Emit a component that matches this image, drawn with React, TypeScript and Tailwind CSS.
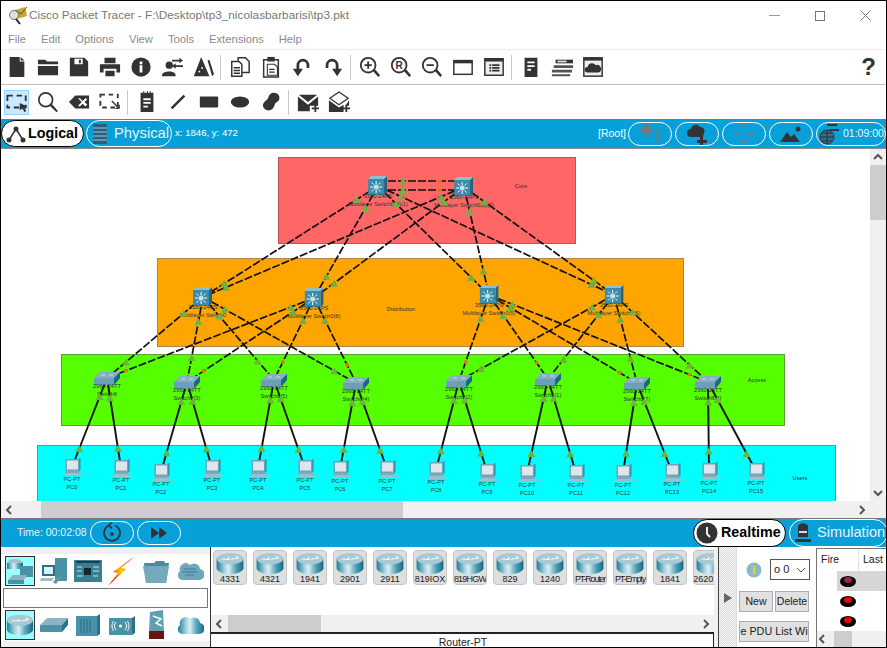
import type { ReactNode } from "react";

type Pt = { x: number; y: number };
type Kind = "mls" | "sw" | "pc";
type Node = Pt & { id: string; kind: Kind; model: string; name: string };

// screen coordinates, the canvas starts at (1,149)
const OX = 1;
const OY = 149;

const zones = [
  { name: "Core", x: 278, y: 157, w: 298, h: 87, lx: 521, ly: 186, cls: "bg-[#ff6666] border-[#b4585c]" },
  { name: "Distribution", x: 157, y: 258, w: 527, h: 89, lx: 401, ly: 309, cls: "bg-[#ffa500] border-[#a8894a]" },
  { name: "Access", x: 61, y: 354, w: 724, h: 72, lx: 757, ly: 380, cls: "bg-[#55ff00] border-[#5aa032]" },
  { name: "Users", x: 37, y: 445, w: 799, h: 70, lx: 800, ly: 478, cls: "bg-[#00ffff] border-[#3fa3a3]" },
];

const mk = (id: string, kind: Kind, x: number, y: number, name: string): Node => ({
  id,
  kind,
  x,
  y,
  name,
  model: kind === "mls" ? "3560-24PS" : kind === "sw" ? "2960-24TT" : "PC-PT",
});

const core = [mk("a", "mls", 378, 186, "Multilayer Switch0(8)(1)"), mk("b", "mls", 464, 187, "Multilayer Switch0(8)(2)")];
const dist = [
  mk("d1", "mls", 203, 297, "Multilayer Switch0"),
  mk("d2", "mls", 314, 298, "Multilayer Switch0(8)"),
  mk("d3", "mls", 489, 295, "Multilayer Switch0(5)"),
  mk("d4", "mls", 614, 295, "Multilayer Switch0(6)"),
];
const access = [
  mk("s0", "sw", 107, 378, "Switch8"),
  mk("s1", "sw", 187, 382, "Switch8(3)"),
  mk("s2", "sw", 274, 380, "Switch8(5)"),
  mk("s3", "sw", 356, 383, "Switch8(4)"),
  mk("s4", "sw", 459, 381, "Switch8(2)"),
  mk("s5", "sw", 548, 379, "Switch8(1)"),
  mk("s6", "sw", 637, 383, "Switch8(7)"),
  mk("s7", "sw", 708, 382, "Switch8(8)"),
];
const pcPos = [
  [72, 467], [121, 468], [161, 472], [212, 468], [258, 468], [305, 468], [340, 469], [387, 469],
  [436, 470], [487, 472], [527, 473], [576, 473], [623, 473], [672, 472], [709, 471], [756, 471],
];
const pcs = pcPos.map(([x, y], i) => mk("p" + i, "pc", x, y, "PC" + i));
const nodes = [...core, ...dist, ...access, ...pcs];

type Link = { a: Pt; b: Pt; orange?: boolean; solid?: boolean };
const links: Link[] = [];
core.forEach((c) => dist.forEach((d) => links.push({ a: c, b: d })));
access.forEach((s, i) => {
  const left = i < 4;
  links.push({ a: left ? dist[0] : dist[3], b: s });
  links.push({ a: left ? dist[1] : dist[2], b: s, orange: true });
  links.push({ a: s, b: pcs[i * 2], solid: true });
  links.push({ a: s, b: pcs[i * 2 + 1], solid: true });
});

function along(a: Pt, b: Pt, d: number): Pt {
  const len = Math.hypot(b.x - a.x, b.y - a.y);
  return { x: a.x + ((b.x - a.x) * d) / len, y: a.y + ((b.y - a.y) * d) / len };
}

function Tri({ p }: { p: Pt }) {
  return <polygon points={`${p.x - 4},${p.y + 3.5} ${p.x + 4},${p.y + 3.5} ${p.x},${p.y - 3.5}`} fill="#6fb23f" />;
}

function Lights() {
  return (
    <svg className="absolute inset-0" width={869} height={352} viewBox={`${OX} ${OY} 869 352`}>
      <Tri p={{ x: 403, y: 181 }} />
      <Tri p={{ x: 403, y: 190 }} />
      <circle cx={440} cy={181} r={2} fill="#f07010" />
      <circle cx={440} cy={190} r={2} fill="#f07010" />
      {links.map((l, i) => {
        const n = l.solid ? 20 : 25;
        const end = along(l.b, l.a, 20);
        return (
          <g key={i}>
            <Tri p={along(l.a, l.b, n)} />
            {l.orange ? <circle cx={end.x} cy={end.y} r={2} fill="#f07010" /> : <Tri p={along(l.b, l.a, n)} />}
          </g>
        );
      })}
    </svg>
  );
}

function Wires() {
  return (
    <svg className="absolute inset-0" width={869} height={352} viewBox={`${OX} ${OY} 869 352`}>
      <line x1={378} y1={181} x2={464} y2={181} stroke="#111" strokeWidth={1.7} strokeDasharray="8 2" />
      <line x1={378} y1={190} x2={464} y2={190} stroke="#111" strokeWidth={1.7} strokeDasharray="8 2" />
      {links.map((l, i) => (
        <line
          key={i}
          x1={l.a.x}
          y1={l.a.y}
          x2={l.b.x}
          y2={l.b.y}
          stroke="#111"
          strokeWidth={l.solid ? 1.9 : 1.7}
          strokeDasharray={l.solid ? undefined : "8 2"}
        />
      ))}
    </svg>
  );
}

function MlsIcon() {
  return (
    <svg width={19} height={19} viewBox="0 0 19 19">
      <polygon points="0,3 3,0 19,0 16,3" fill="#8cc0d0" />
      <polygon points="16,3 19,0 19,16 16,19" fill="#1f6484" />
      <rect x={0} y={3} width={16} height={16} fill="#3a8cab" />
      <g stroke="#fff" strokeWidth={1}>
        <line x1={8} y1={5} x2={8} y2={8} />
        <line x1={8} y1={14} x2={8} y2={17} />
        <line x1={2} y1={11} x2={5} y2={11} />
        <line x1={11} y1={11} x2={14} y2={11} />
        <line x1={3.5} y1={6.5} x2={5.5} y2={8.5} />
        <line x1={12.5} y1={6.5} x2={10.5} y2={8.5} />
        <line x1={3.5} y1={15.5} x2={5.5} y2={13.5} />
        <line x1={12.5} y1={15.5} x2={10.5} y2={13.5} />
      </g>
      <circle cx={8} cy={11} r={2.5} fill="#bfe3ea" />
    </svg>
  );
}

function SwitchIcon() {
  return (
    <svg width={26} height={13} viewBox="0 0 26 13">
      <polygon points="0,6 6,0 26,0 20,6" fill="#86afc2" />
      <polygon points="0,6 20,6 20,13 0,13" fill="#6aa0b8" />
      <polygon points="20,6 26,0 26,6 20,13" fill="#17668c" />
      <g stroke="#d7e8ee" strokeWidth={0.8}>
        <line x1={7} y1={3} x2={11} y2={3} />
        <line x1={15} y1={3} x2={19} y2={3} />
      </g>
    </svg>
  );
}

function PcIcon() {
  return (
    <svg width={16} height={18} viewBox="0 0 16 18" className="overflow-visible">
      <polygon points="14,1 16,0 16,12 14,14" fill="#2f7f9b" />
      <rect x={1} y={1} width={14} height={12} fill="#6ea3b8" />
      <rect x={2.5} y={2.5} width={11} height={9} fill="#dbe7ec" />
      <rect x={1} y={13} width={14} height={2} fill="#7fa9ba" />
      <polygon points="2,15 16,15 13,18 -1,18" fill="#9dbecb" />
      <rect x={16} y={16} width={3} height={2} fill="#9dbecb" />
    </svg>
  );
}

function DeviceNode({ n }: { n: Node }) {
  const icon = n.kind === "mls" ? <MlsIcon /> : n.kind === "sw" ? <SwitchIcon /> : <PcIcon />;
  const top = n.kind === "mls" ? 10 : n.kind === "sw" ? 6 : 9;
  const gap = n.kind === "mls" ? "-mt-[2px]" : n.kind === "sw" ? "-mt-[2px]" : "mt-0";
  return (
    <div
      className="absolute -translate-x-1/2 flex flex-col items-center text-[5.7px] leading-[7.5px] whitespace-nowrap text-[#2c3a33]"
      style={{ left: n.x - OX, top: n.y - OY - top }}
    >
      {icon}
      <span className={gap}>{n.model}</span>
      <span>{n.name}</span>
    </div>
  );
}

function Canvas() {
  return (
    <div className="relative w-[869px] h-[352px] overflow-hidden bg-white">
      {zones.map((z) => (
        <div
          key={z.name}
          className={`absolute border ${z.cls}`}
          style={{ left: z.x - OX, top: z.y - OY, width: z.w, height: z.h }}
        />
      ))}
      {zones.map((z) => (
        <span
          key={z.name}
          className="absolute -translate-x-1/2 -translate-y-1/2 text-[5.7px] text-[#333]"
          style={{ left: z.lx - OX, top: z.ly - OY }}
        >
          {z.name}
        </span>
      ))}
      <Wires />
      {nodes.map((n) => (
        <DeviceNode key={n.id} n={n} />
      ))}
      <Lights />
    </div>
  );
}

const ink = "#333";

function I({ children }: { children: ReactNode }) {
  return (
    <svg width={22} height={22} viewBox="0 0 24 24" fill={ink}>
      {children}
    </svg>
  );
}

const undoPath = "M2 14h4v-4a7 7 0 0 1 14 0v3h-3v-3a4 4 0 0 0-8 0v4h4l-5.5 8z";

const toolbarOne: ReactNode[][] = [
  [
    <I key="new"><path d="M4 1h11v5h5v17H4z" /><path d="M16 1l4 4h-4z" /></I>,
    <I key="open"><path d="M1 4h8l2 2h12v3H1zM1 11h22v10H1z" /></I>,
    <I key="save"><path fillRule="evenodd" d="M2 2h16l4 4v16H2zM7 3v6h9V3zM12 4h2v4h-2z" /></I>,
    <I key="print"><path fillRule="evenodd" d="M6 2h12v6H6zM1 9h22v9h-4v-4H5v4H1zM7 16h10v6H7z" /></I>,
    <I key="info"><circle cx={12} cy={12} r={10.5} /><rect x={10.5} y={10} width={3} height={8} fill="#fff" /><rect x={10.5} y={6} width={3} height={3} fill="#fff" /></I>,
    <I key="user"><circle cx={9} cy={10} r={4} /><path d="M1 22c0-4 4-5 8-5s7 1 7 5zM12 4h8V2l4 3-4 3V6h-8zM24 10h-8V8l-4 3 4 3v-2h8z" /></I>,
    <I key="pdu"><path d="M10 1l9 21H2z" /><path d="M17 5l2-1 5 16-2 2z" /><circle cx={8} cy={17} r={1} fill="#fff" /><circle cx={11} cy={13} r={1} fill="#fff" /></I>,
  ],
  [
    <I key="copy"><g fill="#fff" stroke={ink} strokeWidth={1.6}><path d="M10 2h8l4 4v12H10z" /><path d="M3 6h8l3 3v13H3z" /></g><path d="M5 12h7v1.5H5zM5 15h7v1.5H5zM5 18h7v1.5H5z" /></I>,
    <I key="paste"><path d="M4 4h16v19H4z" fill="#fff" stroke={ink} strokeWidth={1.6} /><path d="M8 1h8v5H8z" /><path d="M8 9h8l3 3v9H8z" fill="#fff" stroke={ink} strokeWidth={1.2} /><path d="M10 14h6v1.4h-6zM10 17h6v1.4h-6z" /></I>,
    <I key="undo"><path d={undoPath} /></I>,
    <I key="redo"><g transform="matrix(-1 0 0 1 24 0)"><path d={undoPath} /></g></I>,
  ],
  [
    <I key="zi"><circle cx={10} cy={10} r={8} fill="none" stroke={ink} strokeWidth={2} /><path d="M6 9h8v2H6zM9 6h2v8H9zM15 16l2-2 6 7-2 2z" /></I>,
    <I key="zr"><circle cx={10} cy={10} r={8} fill="none" stroke={ink} strokeWidth={2} /><path d="M15 16l2-2 6 7-2 2z" /><text x={10} y={14} fontSize={11} fontWeight={700} textAnchor="middle" fontFamily="Liberation Sans">R</text></I>,
    <I key="zo"><circle cx={10} cy={10} r={8} fill="none" stroke={ink} strokeWidth={2} /><path d="M6 9h8v2H6zM15 16l2-2 6 7-2 2z" /></I>,
    <I key="win"><rect x={2} y={5} width={20} height={15} fill="#fff" stroke={ink} strokeWidth={1.6} /><rect x={2} y={5} width={20} height={3} /></I>,
    <I key="list"><rect x={2} y={3} width={20} height={18} fill="#eee" stroke={ink} strokeWidth={1.6} /><rect x={2} y={3} width={20} height={3} /><path d="M7 9h2v2H7zM10 9h8v2h-8zM7 12h2v2H7zM10 12h8v2h-8zM7 15h2v2H7zM10 15h8v2h-8z" /></I>,
  ],
  [
    <I key="dev"><path fillRule="evenodd" d="M5 2h14v21H5zM8 6h8v2H8zM8 10h8v2H8zM8 14h4v2H8z" /></I>,
    <I key="rack"><path d="M5 4h20v4H5z" /><path d="M3 10h21v3H3zM1 15h22v3H1zM1 20h20v2H1z" fill="#555" /><rect x={7} y={5} width={10} height={2} fill="#ddd" /></I>,
    <I key="cloud"><rect x={2} y={2} width={20} height={20} fill="#eee" stroke={ink} strokeWidth={1.6} /><rect x={2} y={2} width={20} height={3} /><path d="M6 18a3 3 0 010-6 5 5 0 019-2 4 4 0 013 8z" /></I>,
  ],
];

const toolbarTwo: ReactNode[][] = [
  [
    <I key="sel"><rect x={1.5} y={5} width={20} height={13} fill="none" stroke={ink} strokeWidth={2} strokeDasharray="6 4" /><path d="M15 13l8 4-3 1 2 4-2 1-2-4-3 2z" /></I>,
    <I key="mag"><circle cx={9.5} cy={9.5} r={7.5} fill="none" stroke={ink} strokeWidth={1.8} /><path d="M14 16l2-2 7 8-2 1z" /></I>,
    <I key="del"><path fillRule="evenodd" d="M8 5h15v14H8l-7-7zM11 8l4 4-4 4 2 1 3-3 3 3 2-2-3-3 3-3-2-1-3 3-3-3z" /></I>,
    <I key="rz"><rect x={1.5} y={4} width={19} height={14} fill="none" stroke={ink} strokeWidth={2} strokeDasharray="5 4" /><path d="M14 11l8 8m0 0v-4m0 4h-4" fill="none" stroke={ink} strokeWidth={1.5} /></I>,
  ],
  [
    <I key="note"><path fillRule="evenodd" d="M5 2h14v21H5zM8 8h8v2H8zM8 12h8v2H8zM8 16h5v2H8z" /><path d="M8 0h1v3H8zM12 0h1v3h-1zM15 0h1v3h-1z" /></I>,
    <I key="line"><path d="M18 4l2 2L6 20l-2-2z" /></I>,
    <I key="rect"><rect x={2} y={6} width={20} height={12} rx={1} /></I>,
    <I key="ell"><ellipse cx={12} cy={12} rx={10} ry={6} /></I>,
    <I key="free"><path d="M15 2c4 0 7 3 6 7-1 3-4 3-5 6-1 4-4 7-8 6-4-1-6-5-4-8 2-3 4-3 5-6s3-5 6-5z" /></I>,
  ],
  [
    <I key="mail"><path d="M2 4l10 8 10-8zM1 6l11 9 11-9v10H14v6H1z" /><path d="M19 15h2v3h3v2h-3v3h-2v-3h-3v-2h3z" /></I>,
    <I key="mailo"><path d="M12 1l10 7-10 7L2 8z" fill="#fff" stroke={ink} strokeWidth={1.4} /><path d="M1 10l11 8 5-3v8H1zM23 10v6h-4z" /><path d="M19 15h2v3h3v2h-3v3h-2v-3h-3v-2h3z" /></I>,
  ],
];

function ToolRow({ groups, selected }: { groups: ReactNode[][]; selected?: boolean }) {
  return (
    <div className="flex items-center h-full">
      {groups.map((group, g) => (
        <div key={g} className="flex items-center">
          {g > 0 && <div className="w-[1px] h-[25px] ml-[2px] mr-[3px] bg-[#c8c8c8]" />}
          {group.map((icon, i) => (
            <div key={i} className="w-[31px] h-[25px] flex items-center justify-center">
              <div
                className={`h-[25px] flex items-center justify-center ${
                  selected && g === 0 && i === 0 ? "w-[25px] bg-[#cce8ff] border border-[#99d1ff]" : "w-[24px]"
                }`}
              >
                {icon}
              </div>
            </div>
          ))}
        </div>
      ))}
    </div>
  );
}

function Pill({ className, children }: { className: string; children?: ReactNode }) {
  return <div className={`h-[24px] rounded-full border border-white flex items-center justify-center ${className}`}>{children}</div>;
}

function TopBlueBar() {
  return (
    <div className="h-[30px] shrink-0 bg-[#07a0d8] border-b border-[#8c8c8c] flex items-center text-white">
      <div className="w-[83px] h-[27px] rounded-full bg-white border border-black flex items-center text-black">
        <svg width={20} height={18} viewBox="0 0 20 18" className="ml-[4px]">
          <path d="M3 15L10 4l7 11" fill="none" stroke="#333" strokeWidth={1.5} />
          <circle cx={3} cy={15} r={2.5} fill="#333" />
          <circle cx={10} cy={4} r={2.5} fill="#333" />
          <circle cx={17} cy={15} r={2.5} fill="#333" />
        </svg>
        <span className="ml-[2px] text-[14.3px] font-bold">Logical</span>
      </div>
      <div className="ml-[2px] w-[86px] h-[27px] rounded-full border border-white flex items-center">
        <svg width={14} height={20} viewBox="0 0 14 20" className="ml-[6px]">
          <rect width={14} height={20} fill="#2b5f80" />
          <path d="M0 4h14M0 8h14M0 12h14M0 16h14" stroke="#9cc9e0" strokeWidth={1} />
        </svg>
        <span className="ml-[7px] text-[14.8px] text-[#e4f4fb]">Physical</span>
      </div>
      <span className="ml-[3px] text-[9.6px]">x: 1846, y: 472</span>
      <span className="ml-auto mr-[2px] text-[10.5px]">[Root]</span>
      <Pill className="w-[44px]">
        <svg width={22} height={20} viewBox="0 0 22 20" fill="none" stroke="#777" strokeWidth={2}>
          <path d="M3 6h11c4 0 6 2 6 6s-2 5-3 6" />
          <path d="M9 1L2 6l7 5z" fill="#777" />
        </svg>
      </Pill>
      <Pill className="w-[44px] ml-[3px]">
        <svg width={22} height={22} viewBox="0 0 22 22" fill="#333">
          <path d="M5 14a4 4 0 010-8 5 5 0 019-2 4 4 0 014 6l-1 4z" />
          <path d="M14 13h3v4h4v3h-4v2h-3v-2h-3v-3h3z" />
        </svg>
      </Pill>
      <Pill className="w-[44px] ml-[3px]">
        <svg width={22} height={22} viewBox="0 0 22 22" fill="#778">
          <path d="M11 1l3 4H8zM11 21l-3-4h6zM1 11l4-3v6zM21 11l-4 3V8z" />
          <circle cx={11} cy={11} r={1} />
        </svg>
      </Pill>
      <Pill className="w-[44px] ml-[3px]">
        <svg width={22} height={18} viewBox="0 0 22 18" fill="#333">
          <path d="M0 17L7 7l4 5 3-3 6 8z" />
          <circle cx={18} cy={4} r={2.5} />
        </svg>
      </Pill>
      <Pill className="w-[70px] ml-[3px] justify-start">
        <svg width={20} height={24} viewBox="0 0 20 24" className="ml-[2px] shrink-0" fill="none" stroke="#333" strokeWidth={1}>
          <circle cx={8} cy={15} r={7} fill="#2f6f8f" />
          <path d="M1 15h14M8 8v14M3 11h10M3 19h10" />
          <path d="M8 3h10M10 8h10" strokeWidth={2} />
        </svg>
        <span className="ml-[4px] text-[10.5px] text-[#eaf6fb]">01:09:00</span>
      </Pill>
    </div>
  );
}

function ChevL({ className = "" }: { className?: string }) {
  return (
    <svg width={8} height={10} viewBox="0 0 8 10" className={className} fill="none" stroke="#555" strokeWidth={2}>
      <path d="M6 1L2 5l4 4" />
    </svg>
  );
}

function ChevR({ className = "" }: { className?: string }) {
  return (
    <svg width={8} height={10} viewBox="0 0 8 10" className={className} fill="none" stroke="#555" strokeWidth={2}>
      <path d="M2 1l4 4-4 4" />
    </svg>
  );
}

function VScroll() {
  return (
    <div className="w-[16px] h-full bg-[#f0f0f0] flex flex-col items-center">
      <svg width={10} height={8} viewBox="0 0 10 8" className="mt-[4px]" fill="none" stroke="#555" strokeWidth={2}>
        <path d="M1 6l4-4 4 4" />
      </svg>
      <div className="w-full h-[55px] mt-[4px] bg-[#cdcdcd]" />
      <svg width={10} height={8} viewBox="0 0 10 8" className="mt-auto mb-[4px]" fill="none" stroke="#555" strokeWidth={2}>
        <path d="M1 2l4 4 4-4" />
      </svg>
    </div>
  );
}

function HScroll() {
  return (
    <div className="h-[18px] shrink-0 bg-[#f0f0f0] border-b border-[#777] flex items-center">
      <ChevL className="ml-[4px]" />
      <div className="ml-[28px] w-[362px] h-full bg-[#cdcdcd]" />
      <ChevR className="ml-auto mr-[20px]" />
    </div>
  );
}

function BottomBlueBar() {
  return (
    <div className="h-[28px] shrink-0 bg-[#07a0d8] flex items-center text-white">
      <span className="ml-[16px] w-[73px] text-[10.5px] text-[#e4f4fb] whitespace-nowrap">Time: 00:02:08</span>
      <Pill className="w-[44px]">
        <svg width={22} height={22} viewBox="0 0 22 22" fill="none" stroke="#333" strokeWidth={1.7}>
          <path d="M14 3.5a8 8 0 11-6 0" />
          <path d="M11 0l-3 3.5 3 3" />
          <circle cx={11} cy={12} r={1} fill="#333" />
        </svg>
      </Pill>
      <Pill className="w-[44px] ml-[3px]">
        <svg width={18} height={12} viewBox="0 0 18 12" fill="#333">
          <path d="M1 0l8 6-8 6zM9 0l8 6-8 6z" />
        </svg>
      </Pill>
      <div className="ml-auto w-[93px] h-[28px] rounded-full bg-white border border-black flex items-center text-black -mt-[1px]">
        <svg width={22} height={22} viewBox="0 0 22 22" className="ml-[2px]">
          <circle cx={11} cy={11} r={10.5} fill="#333" />
          <path d="M11 5v7l3 3" fill="none" stroke="#fff" strokeWidth={1.8} />
        </svg>
        <span className="ml-[3px] text-[14.3px] font-bold">Realtime</span>
      </div>
      <div className="ml-[3px] mr-[-2px] w-[99px] h-[28px] rounded-full border border-white flex items-center">
        <svg width={20} height={22} viewBox="0 0 20 22" className="ml-[3px] shrink-0" fill="#333">
          <path d="M5 4a6 6 0 0110 0v11H5zM2 17h16v3H2z" />
          <rect x={6} y={9} width={8} height={2} fill="#cde" />
        </svg>
        <span className="ml-[4px] text-[14.6px] text-[#e4f4fb] whitespace-nowrap">Simulation</span>
      </div>
    </div>
  );
}

function RouterSvg({ w = 30, h = 24 }: { w?: number; h?: number }) {
  return (
    <svg width={w} height={h} viewBox="0 0 30 24">
      <path d="M1 7v10c0 3 6 6 14 6s14-3 14-6V7z" fill="url(#teal)" />
      <ellipse cx={15} cy={7} rx={14} ry={6} fill="#a8c8d2" />
      <path d="M6 8c3-2 5 1 8-1M13 5l2 2-3 1M16 8c3-2 4 0 8-2M21 4l3 2-3 1" fill="none" stroke="#fff" strokeWidth={1} />
    </svg>
  );
}

const deviceList = [
  { name: "4331", cls: "" },
  { name: "4321", cls: "" },
  { name: "1941", cls: "" },
  { name: "2901", cls: "" },
  { name: "2911", cls: "" },
  { name: "819IOX", cls: "" },
  { name: "819HGW", cls: "tracking-[-0.8px]" },
  { name: "829", cls: "" },
  { name: "1240", cls: "" },
  { name: "PT-Router", cls: "tracking-[-1.2px]" },
  { name: "PT-Empty", cls: "tracking-[-1.2px]" },
  { name: "1841", cls: "" },
  { name: "2620XM", cls: "" },
];

function DeviceList() {
  return (
    <div className="flex gap-[6px] pl-[2px] pt-[3px] h-[68px] overflow-hidden">
      {deviceList.map((d) => (
        <div
          key={d.name}
          className="w-[34px] h-[35px] shrink-0 rounded-[4px] bg-[#dedede] border border-[#c4c4c4] flex flex-col items-center pt-[1px] overflow-hidden"
        >
          <RouterSvg />
          <span className={`text-[9px] leading-[9px] whitespace-nowrap text-[#222] ${d.cls}`}>{d.name}</span>
        </div>
      ))}
    </div>
  );
}

const t = "#4a92a8";
const catIcons: ReactNode[] = [
  <svg key="c1" width={28} height={28} viewBox="0 0 28 28">
    <ellipse cx={9} cy={6} rx={8} ry={4} fill="#9fc2cd" />
    <rect x={1} y={6} width={16} height={6} fill="url(#teal)" />
    <rect x={14} y={9} width={13} height={11} fill={t} />
    <polygon points="2,23 7,18 21,18 18,23" fill="#8cb4c4" />
    <rect x={2} y={23} width={16} height={4} fill={t} />
  </svg>,
  <svg key="c2" width={28} height={28} viewBox="0 0 28 28">
    <rect x={15} y={1} width={12} height={23} fill={t} />
    <rect x={2} y={8} width={13} height={11} fill="#2c6f88" />
    <rect x={4} y={10} width={9} height={7} fill="#e2edf1" />
    <polygon points="1,21 14,21 12,24 0,24" fill="#9dbecb" />
    <polygon points="13,25 19,19 21,20 16,27" fill="#5d95aa" />
  </svg>,
  <svg key="c3" width={28} height={22} viewBox="0 0 28 22">
    <rect width={28} height={22} fill="#3c7d93" />
    <rect x={2} y={1} width={24} height={2} fill="#1f3f4f" />
    <rect x={10} y={8} width={7} height={7} fill="#16252d" />
    <path d="M3 7h5M3 11h5M3 16h6M19 7h6M19 11h6M19 16h5" stroke="#9fc" strokeWidth={1} />
  </svg>,
  <svg key="c4" width={30} height={30} viewBox="0 0 30 30">
    <defs>
      <radialGradient id="bolt">
        <stop offset="0" stopColor="#ffd800" />
        <stop offset="1" stopColor="#f01010" />
      </radialGradient>
    </defs>
    <path d="M28 0L14 12l5 1-18 17 10-13-5-1z" fill="url(#bolt)" />
  </svg>,
  <svg key="c5" width={28} height={24} viewBox="0 0 28 24">
    <path d="M2 4h10l2-2h8l1 2h4l-3 20H4z" fill="#4a8ba3" />
    <path d="M1 7h26l-3 17H4z" fill="#75a9bb" />
  </svg>,
  <svg key="c6" width={28} height={20} viewBox="0 0 28 20">
    <path d="M6 19a5 5 0 01-2-9 6 6 0 0110-6 6 6 0 0110 4 5 5 0 01-2 11z" fill="#6fa6ba" />
    <path d="M8 8h12M6 11h16M9 14h9" stroke="#3d7a92" strokeWidth={1} />
  </svg>,
];

const subIcons: ReactNode[] = [
  <RouterSvg key="s1" w={28} h={24} />,
  <svg key="s2" width={28} height={14} viewBox="0 0 28 14">
    <polygon points="0,7 7,0 28,0 22,7" fill="#8cb4c4" />
    <rect y={7} width={22} height={7} fill={t} />
    <polygon points="22,7 28,0 28,7 22,14" fill="#2a7088" />
  </svg>,
  <svg key="s3" width={24} height={22} viewBox="0 0 24 22">
    <rect y={2} width={21} height={20} fill={t} />
    <polygon points="21,2 24,0 24,20 21,22" fill="#2a7088" />
    <path d="M5 5v14M8 5v14M11 5v14M14 5v14" stroke="#2f6f86" strokeWidth={1} />
  </svg>,
  <svg key="s4" width={26} height={19} viewBox="0 0 26 19">
    <rect y={2} width={23} height={17} fill={t} />
    <polygon points="23,2 26,0 26,17 23,19" fill="#2a7088" />
    <circle cx={11.5} cy={10} r={1.5} fill="#fff" />
    <path d="M7 6c-2 3-2 5 0 8M16 6c2 3 2 5 0 8M4.5 5c-2 4-2 6 0 10M18.5 5c2 4 2 6 0 10" fill="none" stroke="#fff" strokeWidth={1} />
  </svg>,
  <svg key="s5" width={17} height={30} viewBox="0 0 17 30">
    <polygon points="2,2 15,0 16,22 1,22" fill="#5f9fb2" />
    <rect x={1} y={21} width={15} height={8} fill="#6b1414" />
    <path d="M5 6l8 3-5 4 6 3" fill="none" stroke="#fff" strokeWidth={1.5} />
  </svg>,
  <svg key="s6" width={28} height={20} viewBox="0 0 28 20">
    <path d="M6 19a5 5 0 01-2-9 6 6 0 0110-6 6 6 0 0110 4 5 5 0 01-2 11z" fill="url(#teal)" />
  </svg>,
];

function IconStrip({ icons }: { icons: ReactNode[] }) {
  return (
    <div className="flex items-center h-full">
      {icons.map((icon, i) => (
        <div
          key={i}
          className={`w-[30px] h-[30px] flex items-center justify-center shrink-0 ${
            i === 0 ? "ml-[4px] mr-[4px] bg-[#99ffff] border border-[#333]" : "mr-[4px]"
          }`}
        >
          {icon}
        </div>
      ))}
    </div>
  );
}

function LeftPanel() {
  return (
    <div className="w-[210px] shrink-0 border-r border-[#333] flex flex-col bg-white">
      <div className="h-[7px] bg-[#f0f0f0]" />
      <div className="h-[34px]">
        <IconStrip icons={catIcons} />
      </div>
      <div className="h-[20px] mx-[2px] border border-[#777]" />
      <div className="h-[33px] pt-[1px]">
        <IconStrip icons={subIcons} />
      </div>
      <div className="flex-1 bg-[#f0f0f0]" />
    </div>
  );
}

function DevicePanel() {
  return (
    <div className="w-[503px] shrink-0 flex flex-col bg-white">
      <DeviceList />
      <div className="h-[17px] bg-[#f0f0f0] flex items-center">
        <ChevL className="ml-[4px]" />
        <div className="ml-[5px] w-[93px] h-full bg-[#cdcdcd]" />
        <ChevR className="ml-auto mr-[4px]" />
      </div>
      <div className="flex-1 border-t-2 border-r border-[#222] text-[10.5px] leading-[17px] text-center text-[#222] pl-[2px] overflow-hidden">
        Router-PT
      </div>
    </div>
  );
}

function Ball({ dark }: { dark?: boolean }) {
  return (
    <span className="relative block w-[16px] h-[11px] rounded-[50%] bg-black">
      <span className={`absolute left-[4px] top-[1px] w-[8px] h-[6px] rounded-[50%] ${dark ? "bg-[#a02040]" : "bg-[#f00000]"}`} />
    </span>
  );
}

function PduPanel() {
  return (
    <div className="flex-1 flex min-w-0">
      <div className="w-[5px] bg-[#f0f0f0] border-r border-[#444]" />
      <div className="w-[18px] bg-[#e8e8e8] bg-[repeating-conic-gradient(#dcdcdc_0_25%,#f6f6f6_0_50%)] bg-[length:2px_2px] flex items-center justify-center border-r border-[#ddd]">
        <svg width={8} height={10} viewBox="0 0 8 10" className="mt-[2px]">
          <path d="M0 0l8 5-8 5z" fill="#666" />
        </svg>
      </div>
      <div className="w-[79px] shrink-0 bg-white flex flex-col px-[2px]">
        <div className="flex items-center h-[44px] pt-[1px]">
          <svg width={16} height={16} viewBox="0 0 16 16" className="ml-[7px]">
            <circle cx={8} cy={8} r={7.5} fill="#8cb9c9" />
            <rect x={7} y={4} width={2.4} height={8} fill="#e8d020" />
          </svg>
          <div className="ml-[8px] w-[40px] h-[21px] border border-[#555] flex items-center text-[11px] text-[#222]">
            <span className="pl-[3px]">o 0</span>
            <svg width={10} height={6} viewBox="0 0 10 6" className="ml-[7px]" fill="none" stroke="#555">
              <path d="M1 1l4 4 4-4" />
            </svg>
          </div>
        </div>
        <div className="flex gap-[2px]">
          <div className="w-[34px] h-[21px] bg-[#e1e1e1] border border-[#adadad] flex items-center justify-center text-[10.5px] text-[#222]">New</div>
          <div className="w-[34px] h-[21px] bg-[#e1e1e1] border border-[#adadad] flex items-center justify-center text-[10.5px] text-[#222]">Delete</div>
        </div>
        <div className="w-[70px] h-[21px] mt-[9px] bg-[#e1e1e1] border border-[#adadad] overflow-hidden flex items-center justify-center text-[10.8px] text-[#222] whitespace-nowrap">
          Toggle PDU List Window
        </div>
      </div>
      <div className="flex-1 min-w-0 border-l border-t border-[#777] mt-[1px] flex flex-col overflow-hidden text-[10.5px] text-[#222]">
        <div className="h-[22px] flex items-center">
          <span className="w-[42px] pl-[4px] border-r border-[#e0e0e0] h-full flex items-center">Fire</span>
          <span className="pl-[4px]">Last</span>
        </div>
        <div className="h-[20px] ml-[20px] bg-[#d6d6d6] flex items-center pl-[3px]"><Ball dark /></div>
        <div className="h-[20px] ml-[20px] flex items-center pl-[3px]"><Ball /></div>
        <div className="h-[20px] ml-[20px] flex items-center pl-[3px]"><Ball /></div>
        <div className="flex-1 bg-[#f0f0f0] flex items-center">
          <ChevL className="ml-[1px]" />
          <div className="ml-[8px] w-[18px] h-full bg-[#cdcdcd]" />
        </div>
      </div>
    </div>
  );
}

export default function App() {
  return (
    <div className="w-[887px] h-[648px] border border-black bg-white flex flex-col overflow-hidden font-['Liberation_Sans',Arial,sans-serif]">
      <svg className="absolute w-0 h-0">
        <defs>
          <linearGradient id="teal">
            <stop offset="0" stopColor="#1d7c96" />
            <stop offset="0.3" stopColor="#a6d2de" />
            <stop offset="0.45" stopColor="#d9eff4" />
            <stop offset="0.7" stopColor="#5aa6bb" />
            <stop offset="1" stopColor="#0e6a86" />
          </linearGradient>
        </defs>
      </svg>

      <div className="h-[29px] shrink-0 flex items-center text-[11.8px] text-[#777]">
        <svg width={20} height={20} viewBox="0 0 20 20" className="ml-[7px]">
          <path d="M7 4l10-3 2 9-10 3z" fill="#c9a33a" />
          <path d="M7 4l6 4 6-7" fill="none" stroke="#6b5416" strokeWidth={1} />
          <circle cx={6} cy={9} r={4.5} fill="#cfe8cf" stroke="#777" />
          <path d="M8 13l4 5" stroke="#222" strokeWidth={2} />
        </svg>
        <span className="ml-[1px] whitespace-nowrap">Cisco Packet Tracer - F:\Desktop\tp3_nicolasbarbarisi\tp3.pkt</span>
        <div className="ml-auto flex items-center gap-[35px] pr-[15px]">
          <div className="w-[11px] h-[1px] bg-[#999]" />
          <div className="w-[10px] h-[10px] border border-[#777]" />
          <svg width={11} height={11} viewBox="0 0 11 11" stroke="#777">
            <path d="M0.5 0.5l10 10M10.5 0.5l-10 10" />
          </svg>
        </div>
      </div>

      <div className="h-[20px] shrink-0 border-b border-[#eeeeee] flex items-center pl-[7px] gap-[15px] text-[11.2px] text-[#8a8a8a]">
        {["File", "Edit", "Options", "View", "Tools", "Extensions", "Help"].map((m) => (
          <span key={m}>{m}</span>
        ))}
      </div>

      <div className="h-[35px] shrink-0 border-b border-[#c0c0c0] flex items-center">
        <ToolRow groups={toolbarOne} />
        <span className="ml-auto mr-[10px] text-[24px] font-bold text-[#333]">?</span>
      </div>

      <div className="h-[34px] shrink-0">
        <ToolRow groups={toolbarTwo} selected />
      </div>

      <TopBlueBar />

      <div className="h-[352px] shrink-0 flex">
        <Canvas />
        <VScroll />
      </div>

      <HScroll />
      <BottomBlueBar />

      <div className="h-[100px] shrink-0 flex">
        <LeftPanel />
        <DevicePanel />
        <PduPanel />
      </div>
    </div>
  );
}
